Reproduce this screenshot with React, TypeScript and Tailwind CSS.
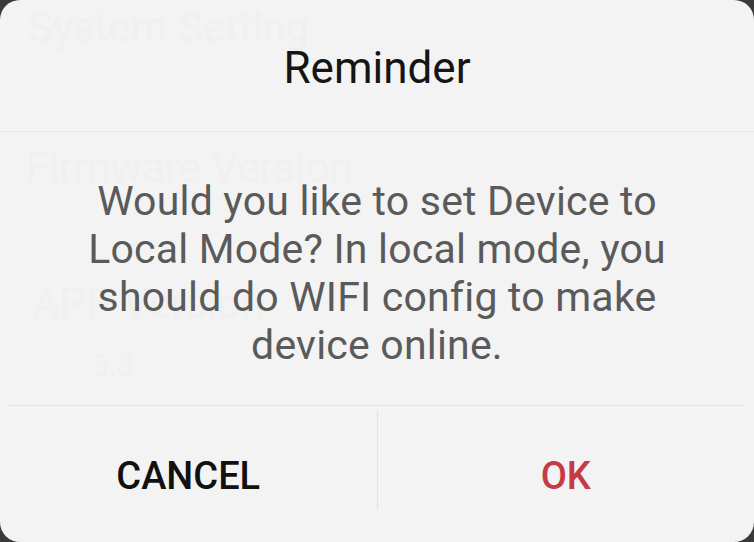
import React from "react";

const ghostRows = [
  { label: "System Setting", className: "pl-[28px] pt-[4px] text-[42px]" },
  { label: "Firmware Version", className: "pl-[26px] pt-[92px] text-[42px]" },
  { label: "APP Version", className: "pl-[32px] pt-[88px] text-[42px]" },
  { label: "3.8", className: "pl-[92px] pt-[14px] text-[30px]" },
];

const App: React.FC = () => {
  return (
    <div
      className="w-[754px] h-[542px] bg-[#3a3a3a] overflow-hidden"
      style={{ fontFamily: "Roboto, 'Liberation Sans', sans-serif" }}
    >
      <div className="relative w-full h-full rounded-[20px] bg-[#f3f3f3] overflow-hidden">
        {/* settings page faintly visible through the dialog */}
        <div className="absolute inset-0 flex flex-col text-[#f0f0f0] pointer-events-none select-none">
          {ghostRows.map((row) => (
            <div key={row.label} className={`leading-[48px] ${row.className}`}>
              {row.label}
            </div>
          ))}
        </div>

        <div className="relative flex flex-col h-full">
          <div className="h-[130px] flex items-center justify-center pt-[6px]">
            <h2 className="text-[44px] text-[#151515]">Reminder</h2>
          </div>
          <div className="h-[2px] bg-[#fbfbfb] border-b border-[#e6e6e6]" />

          <div className="h-[273px] flex items-start justify-center pt-[45px]">
            <p className="w-[584px] text-center text-[41px] leading-[48px] text-[#5a5a5a] tracking-[0.2px]">
              Would you like to set Device to Local Mode? In local mode, you
              should do WIFI config to make device online.
            </p>
          </div>

          <div className="h-px bg-[#e4e4e4] mx-[8px]" />
          <div className="flex flex-1 pt-[4px]">
            <button className="flex-1 flex items-center justify-center text-[38px] font-medium text-[#111]">
              CANCEL
            </button>
            <div className="w-px bg-[#e2e2e2] mb-[32px]" />
            <button className="flex-1 flex items-center justify-center text-[38px] font-medium text-[#c63a45]">
              OK
            </button>
          </div>
        </div>
      </div>
    </div>
  );
};

export default App;
